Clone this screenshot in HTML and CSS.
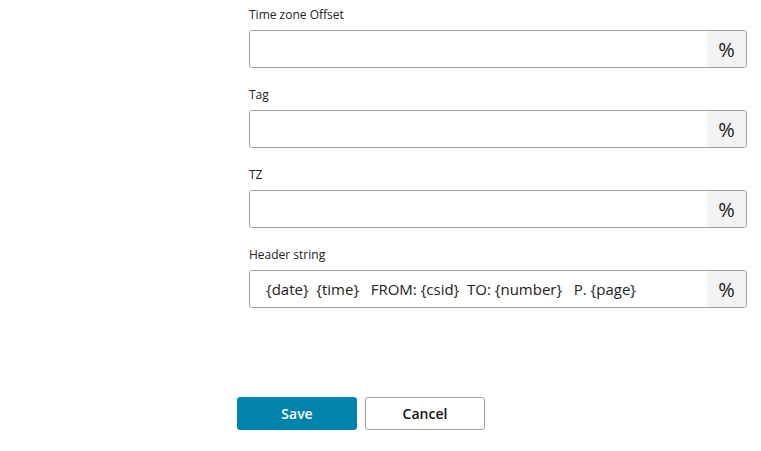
FILE: index.html
```html
<!DOCTYPE html>
<html>
<head>
  <meta charset="utf-8">
  <title>Header settings</title>
  <link rel="stylesheet" href="styles.css">
</head>
<body>
  <div class="content">
    <form class="settings">
      <div class="field">
        <label for="tzoffset">Time zone Offset</label>
        <div class="input-group">
          <input type="text" id="tzoffset" value="">
          <span class="addon">%</span>
        </div>
      </div>
      <div class="field">
        <label for="tag">Tag</label>
        <div class="input-group">
          <input type="text" id="tag" value="">
          <span class="addon">%</span>
        </div>
      </div>
      <div class="field">
        <label for="tz">TZ</label>
        <div class="input-group">
          <input type="text" id="tz" value="">
          <span class="addon">%</span>
        </div>
      </div>
      <div class="field">
        <label for="header">Header string</label>
        <div class="input-group">
          <input type="text" id="header" value="{date}  {time}   FROM: {csid}  TO: {number}   P. {page}">
          <span class="addon">%</span>
        </div>
      </div>
    </form>

    <div class="actions">
      <button type="button" class="button primary">Save</button>
      <button type="button" class="button">Cancel</button>
    </div>
  </div>
</body>
</html>
```

FILE: styles.css
```css
body {
  margin: 0;
  background: #FFF;
  color: #222;
  font-family: "Open Sans", Arial, sans-serif;
}

.content {
  padding: 7px 0 0 237px;
}

.settings {
  padding-left: 12px;
  width: 498px;
}

.field {
  margin-bottom: 19px;
}

label {
  display: block;
  font-size: 12px;
  line-height: 16px;
  margin-bottom: 7px;
  color: #222;
}

.input-group {
  display: flex;
  height: 38px;
  box-sizing: border-box;
  border: 1px solid #A0A0A0;
  border-radius: 3px;
  overflow: hidden;
}

.input-group input {
  flex: 1;
  min-width: 0;
  border: 0 none;
  outline: 0;
  padding: 0 0 0 16px;
  font-family: "Open Sans", Arial, sans-serif;
  font-size: 15px;
  color: #222;
}

.addon {
  width: 39px;
  display: flex;
  align-items: center;
  justify-content: center;
  background: #F2F2F2;
  font-size: 20px;
  color: #222;
}

.actions {
  display: flex;
  gap: 8px;
  margin-top: 89px;
}

.button {
  width: 120px;
  height: 33px;
  box-sizing: border-box;
  border: 1px solid #A0A0A0;
  border-radius: 3px;
  background: #FFF;
  color: #111;
  font-family: "Open Sans", Arial, sans-serif;
  font-size: 14px;
  font-weight: 600;
  cursor: pointer;
}

.button.primary {
  background: #0083AD;
  border-color: #0083AD;
  color: #FFF;
}
```
